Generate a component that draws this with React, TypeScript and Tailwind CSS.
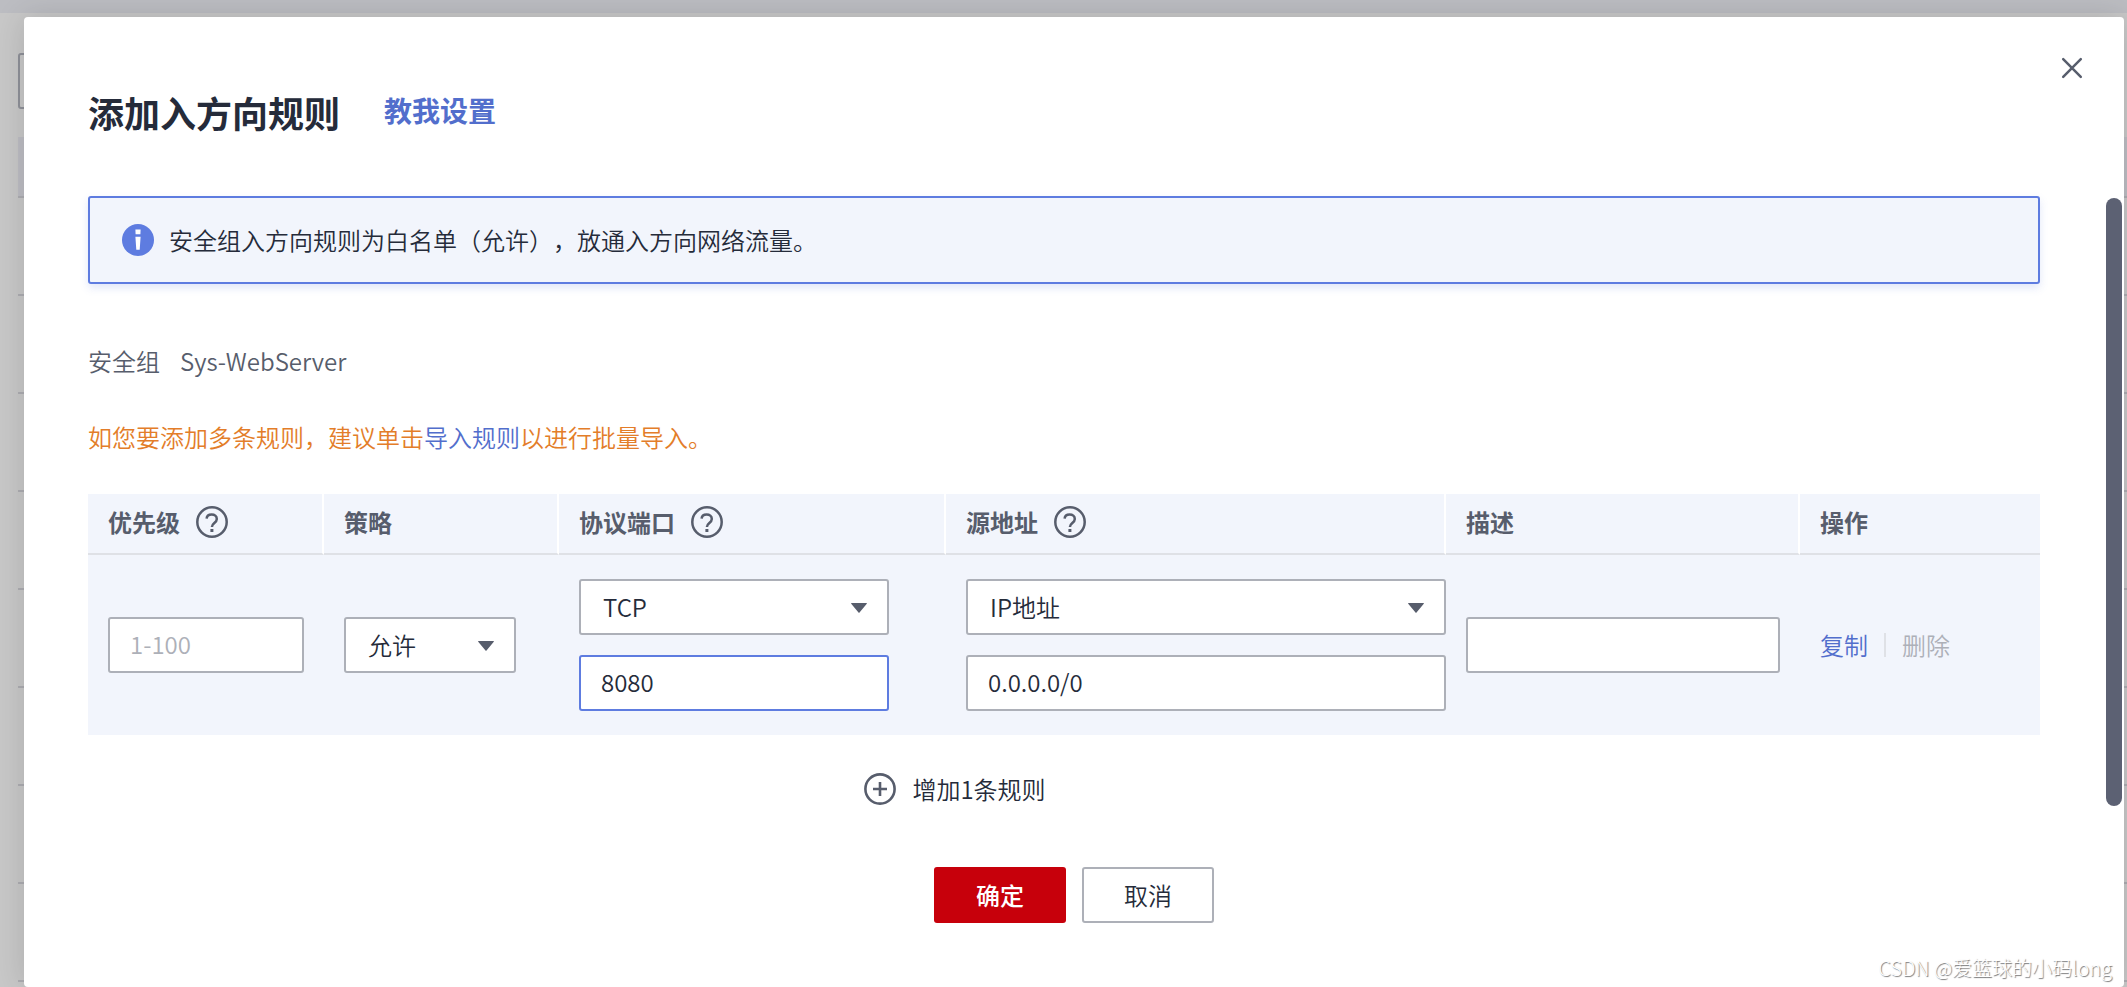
import type { ReactNode } from "react";

const inputClass =
  "block h-14 w-full rounded-[3px] border-2 border-[#adb0b8] bg-white px-5 pb-1 text-2xl text-[#252b3a] outline-none placeholder:text-[#adb0b8] placeholder:opacity-100";

function HelpIcon() {
  return (
    <svg viewBox="0 0 32 32" className="size-8 shrink-0" fill="none" stroke="#575d6c" strokeWidth="2.5">
      <circle cx="16" cy="16" r="14.7" />
      <path d="M10.6 12.6C10.8 9.9 12.9 8.5 15.6 8.5c3 0 5.2 1.7 5.2 4.5 0 4-4.9 4-4.9 8" />
      <path d="M15.9 23v3" strokeWidth="3" />
    </svg>
  );
}

function HeadCell({ children, help, last }: { children: ReactNode; help?: boolean; last?: boolean }) {
  return (
    <th scope="col" className="h-[61px] p-0 text-left align-top">
      <div
        className={
          last
            ? "flex h-[61px] items-center gap-4 border-b-2 border-[#dfe1e6] pb-1 pl-5"
            : "flex h-[61px] items-center gap-4 border-r-2 border-b-2 border-r-white border-b-[#dfe1e6] pb-1 pl-5"
        }
      >
        <span>{children}</span>
        {help && (
          <button type="button" aria-label="帮助">
            <HelpIcon />
          </button>
        )}
      </div>
    </th>
  );
}

function Select({ label, options }: { label: string; options: string[] }) {
  return (
    <div className="relative">
      <select
        aria-label={label}
        className="block h-14 w-full appearance-none rounded-[3px] border-2 border-[#adb0b8] bg-white pr-12 pl-[22px] text-2xl text-[#252b3a] outline-none"
      >
        {options.map((o) => (
          <option key={o}>{o}</option>
        ))}
      </select>
      <svg
        viewBox="0 0 16 10"
        className="pointer-events-none absolute top-6 right-[22px] h-[10px] w-4"
        fill="#575d6c"
      >
        <path d="M.6 0h14.8c.5 0 .7.5.4.8L8.5 9.6a.6.6 0 0 1-1 0L.2.8C-.1.5.1 0 .6 0z" />
      </svg>
    </div>
  );
}

function Backdrop() {
  return (
    <div aria-hidden="true" className="absolute inset-0 flex flex-col overflow-hidden bg-[#c8c8c8]">
      <div className="h-[13px] shrink-0 bg-[#bcbdc2]" />
      <div className="pl-[18px]">
        <div className="mt-10 h-14 w-96 rounded-[3px] border-2 border-[#8f9199]" />
        <div className="mt-7 h-[61px] border-b-2 border-[#adadb2] bg-[#bdbdc3]" />
        {Array.from({ length: 8 }, (_, i) => (
          <div key={i} className="h-[98px] border-b-2 border-[#adadb2]" />
        ))}
      </div>
    </div>
  );
}

export default function App() {
  return (
    <div className="relative flex min-h-screen flex-col overflow-hidden pt-[17px] pr-[3px] pl-6 font-['Noto_Sans_CJK_SC',sans-serif] text-2xl leading-9 font-[350] text-[#252b3a] [text-spacing-trim:space-all]">
      <Backdrop />
      <main
        role="dialog"
        aria-labelledby="dialog-title"
        className="relative grow rounded bg-white px-16 pt-[71px] pb-16 shadow-[0_0_32px_rgba(0,0,0,0.14)]"
      >
        <button type="button" aria-label="关闭" className="absolute top-10 right-[41px]">
          <svg viewBox="0 0 22 22" className="size-[22px]" stroke="#575d6c" strokeWidth="2.5" strokeLinecap="round">
            <path d="M2.2 2.2l17.6 17.6M19.8 2.2L2.2 19.8" />
          </svg>
        </button>
        <div className="absolute top-[181px] right-0.5 h-[608px] w-4 rounded-full bg-[#5c6173]" />

        <div className="pr-5">
          <header className="flex h-12 items-start gap-11">
            <h1 id="dialog-title" className="text-4xl leading-[48px] font-bold">
              添加入方向规则
            </h1>
            <a href="#help" className="text-[28px] leading-[44px] font-bold text-[#526ecc]">
              教我设置
            </a>
          </header>

          <div
            role="note"
            className="mt-[60px] flex h-[88px] items-center gap-[15px] rounded-[3px] border-2 border-[#5e7ce0] bg-[#f2f5fc] pl-8 shadow-[0_4px_8px_rgba(94,124,224,0.18)]"
          >
            <svg viewBox="0 0 32 32" className="size-8 shrink-0">
              <circle cx="16" cy="16" r="16" fill="#5e7ce0" />
              <path d="M13.4 5.6h5.2l-.2 4.6h-4.8zM13.4 12.8h5.2l-.9 13h-3.4z" fill="#fff" />
            </svg>
            <p>安全组入方向规则为白名单（允许），放通入方向网络流量。</p>
          </div>

          <dl className="mt-[59px] flex gap-5 text-[#575d6c]">
            <dt>安全组</dt>
            <dd>Sys-WebServer</dd>
          </dl>

          <p className="mt-10 text-[#e37d29]">
            如您要添加多条规则，建议单击
            <a href="#import" className="text-[#526ecc]">
              导入规则
            </a>
            以进行批量导入。
          </p>

          <table className="mt-[39px] w-full table-fixed border-collapse bg-[#f2f5fc]">
            <colgroup>
              <col className="w-[236px]" />
              <col className="w-[235px]" />
              <col className="w-[387px]" />
              <col className="w-[500px]" />
              <col className="w-[354px]" />
              <col className="w-[240px]" />
            </colgroup>
            <thead className="text-[#575d6c]">
              <tr>
                <HeadCell help>优先级</HeadCell>
                <HeadCell>策略</HeadCell>
                <HeadCell help>协议端口</HeadCell>
                <HeadCell help>源地址</HeadCell>
                <HeadCell>描述</HeadCell>
                <HeadCell last>操作</HeadCell>
              </tr>
            </thead>
            <tbody>
              <tr>
                <td className="px-5 py-6">
                  <input aria-label="优先级" placeholder="1-100" className={inputClass} />
                </td>
                <td className="py-6 pr-[43px] pl-5">
                  <Select label="策略" options={["允许", "拒绝"]} />
                </td>
                <td className="py-6 pr-[57px] pl-5">
                  <div className="flex flex-col gap-5">
                    <Select label="协议" options={["TCP", "UDP", "ICMP"]} />
                    <input
                      aria-label="端口"
                      defaultValue="8080"
                      className="block h-14 w-full rounded-[3px] border-2 border-[#5e7ce0] bg-white px-5 pb-1 text-2xl text-[#252b3a] outline-none"
                    />
                  </div>
                </td>
                <td className="py-6 pl-5">
                  <div className="flex flex-col gap-5">
                    <Select label="源地址类型" options={["IP地址", "安全组"]} />
                    <input aria-label="源地址" defaultValue="0.0.0.0/0" className={inputClass} />
                  </div>
                </td>
                <td className="px-5 py-6">
                  <input aria-label="描述" className={inputClass} />
                </td>
                <td className="py-6 pl-5">
                  <div className="flex items-center gap-4">
                    <button type="button" className="text-[#526ecc]">
                      复制
                    </button>
                    <span className="h-6 w-0.5 bg-[#dfe1e6]" />
                    <button type="button" disabled className="text-[#adb0b8]">
                      删除
                    </button>
                  </div>
                </td>
              </tr>
            </tbody>
          </table>

          <div className="mt-9 flex justify-center pr-[218px]">
            <button type="button" className="flex items-center gap-4">
              <svg viewBox="0 0 32 32" className="size-8" fill="none" stroke="#575d6c" strokeWidth="2.6">
                <circle cx="16" cy="16" r="14.6" />
                <path d="M9 16h14M16 9v14" />
              </svg>
              增加1条规则
            </button>
          </div>
        </div>

        <footer className="mt-[60px] flex justify-center gap-4">
          <button type="button" className="h-14 w-[132px] rounded-[3px] bg-[#c7000b] font-medium text-white">
            确定
          </button>
          <button type="button" className="h-14 w-[132px] rounded-[3px] border-2 border-[#adb0b8] bg-white">
            取消
          </button>
        </footer>
      </main>
      <p className="absolute right-[15px] bottom-[3px] text-xl leading-8 font-light text-white [text-shadow:1px_1px_1px_#777]">
        CSDN @爱篮球的小码long
      </p>
    </div>
  );
}
